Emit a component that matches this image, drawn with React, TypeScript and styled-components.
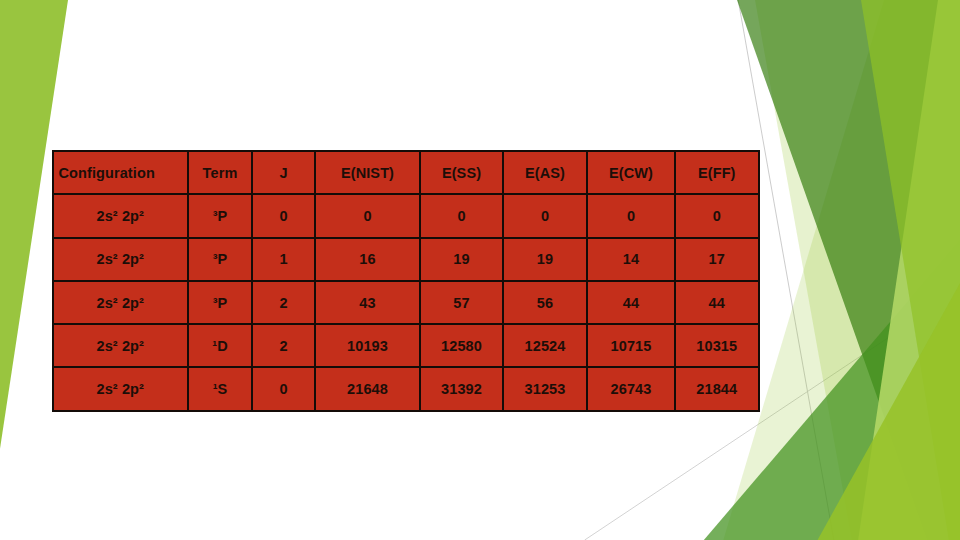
import React from "react";
import styled, { createGlobalStyle } from "styled-components";

const GlobalStyle = createGlobalStyle`
  html, body { margin: 0; padding: 0; background: #ffffff; }
  #root { width: 960px; height: 540px; }
`;

const Slide = styled.div`
  position: relative;
  width: 960px;
  height: 540px;
  overflow: hidden;
  background: #ffffff;
  font-family: "Liberation Sans", Arial, sans-serif;
`;

const Backdrop = styled.svg`
  position: absolute;
  inset: 0;
  width: 960px;
  height: 540px;
  z-index: 0;
`;

const Content = styled.div`
  position: relative;
  z-index: 1;
  box-sizing: border-box;
  padding: 150px 0 0 51.5px;
`;

const Table = styled.div`
  display: inline-grid;
  grid-template-columns: 133.5px 62px 61px 103px 81px 82px 86px 81.5px;
  grid-auto-rows: 41.3px;
  gap: 2px;
  padding: 2px;
  background: #140c08;
`;

const Cell = styled.div<{ $left?: boolean }>`
  background: #c42f1b;
  color: #1c0e08;
  font-size: 14.5px;
  font-weight: bold;
  display: flex;
  align-items: center;
  justify-content: ${(p) => (p.$left ? "flex-start" : "center")};
  padding-left: ${(p) => (p.$left ? "5px" : "0")};
  white-space: nowrap;
  letter-spacing: 0.1px;
`;

const headers = ["Configuration", "Term", "J", "E(NIST)", "E(SS)", "E(AS)", "E(CW)", "E(FF)"];

const rows: string[][] = [
  ["2s² 2p²", "³P", "0", "0", "0", "0", "0", "0"],
  ["2s² 2p²", "³P", "1", "16", "19", "19", "14", "17"],
  ["2s² 2p²", "³P", "2", "43", "57", "56", "44", "44"],
  ["2s² 2p²", "¹D", "2", "10193", "12580", "12524", "10715", "10315"],
  ["2s² 2p²", "¹S", "0", "21648", "31392", "31253", "26743", "21844"],
];

const A1 = "#90c226";

function Decoration() {
  return (
    <Backdrop viewBox="0 0 960 540" xmlns="http://www.w3.org/2000/svg">
      <polygon points="0,0 68,0 0,448.7" fill="#99c53f" />
      <line x1="738" y1="-1" x2="834" y2="541" stroke="#bfbfbf" strokeWidth="0.8" />
      <line x1="584.7" y1="540" x2="960" y2="289.9" stroke="#c8c8c8" strokeWidth="0.8" />
      <polygon points="884,0 960,0 960,541 723,541" fill={A1} fillOpacity="0.2" />
      <polygon points="755,0 960,0 960,541 852,541" fill={A1} fillOpacity="0.22" />
      <polygon points="737,0 960,0 960,541 928,541" fill="#2b7603" fillOpacity="0.65" />
      <polygon points="960,240 703,541 960,541" fill="#42921e" fillOpacity="0.73" />
      <polygon points="938,0 960,0 960,541 858,541" fill="#b4d866" fillOpacity="0.88" />
      <polygon points="861,0 960,0 960,541 949,541" fill={A1} fillOpacity="0.7" />
      <polygon points="960,283 817,541 960,541" fill="#96c228" fillOpacity="0.85" />
    </Backdrop>
  );
}

export default function App() {
  return (
    <>
      <GlobalStyle />
      <Slide>
        <Decoration />
        <Content>
          <Table>
            {headers.map((h, i) => (
              <Cell key={h} $left={i === 0}>
                {h}
              </Cell>
            ))}
            {rows.map((r, ri) =>
              r.map((v, ci) => <Cell key={`${ri}-${ci}`}>{v}</Cell>)
            )}
          </Table>
        </Content>
      </Slide>
    </>
  );
}
